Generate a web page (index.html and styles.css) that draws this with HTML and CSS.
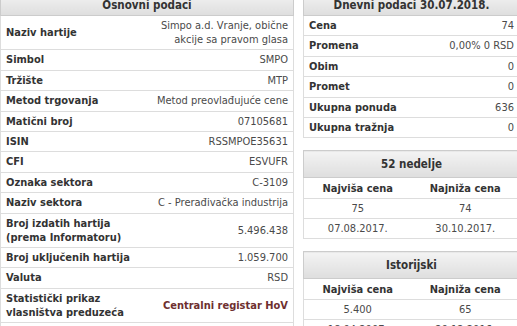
FILE: index.html
```html
<!DOCTYPE html>
<html lang="sr">
<head>
<meta charset="utf-8">
<title>SMPO – Simpo a.d. Vranje</title>
<link rel="stylesheet" href="styles.css">
</head>
<body>
<div class="page">
  <div class="col-main">
    <table class="info">
      <thead>
        <tr><th colspan="2" class="head head-top">Osnovni podaci</th></tr>
      </thead>
      <tbody>
        <tr><td class="lbl">Naziv hartije</td><td class="val">Simpo a.d. Vranje, obične akcije sa pravom glasa</td></tr>
        <tr><td class="lbl">Simbol</td><td class="val">SMPO</td></tr>
        <tr><td class="lbl">Tržište</td><td class="val">MTP</td></tr>
        <tr><td class="lbl">Metod trgovanja</td><td class="val">Metod preovlađujuće cene</td></tr>
        <tr><td class="lbl">Matični broj</td><td class="val">07105681</td></tr>
        <tr><td class="lbl">ISIN</td><td class="val">RSSMPOE35631</td></tr>
        <tr><td class="lbl">CFI</td><td class="val">ESVUFR</td></tr>
        <tr><td class="lbl">Oznaka sektora</td><td class="val">C-3109</td></tr>
        <tr><td class="lbl">Naziv sektora</td><td class="val">C - Prerađivačka industrija</td></tr>
        <tr><td class="lbl">Broj izdatih hartija (prema Informatoru)</td><td class="val">5.496.438</td></tr>
        <tr><td class="lbl">Broj uključenih hartija</td><td class="val">1.059.700</td></tr>
        <tr><td class="lbl">Valuta</td><td class="val">RSD</td></tr>
        <tr><td class="lbl">Statistički prikaz vlasništva preduzeća</td><td class="val"><a class="link" href="#">Centralni registar HoV</a></td></tr>
        <tr><td class="lbl">Internet prezentacija</td><td class="val"><a class="link" href="#">www.simpo.rs</a></td></tr>
      </tbody>
    </table>
  </div>

  <div class="col-side">
    <table class="info">
      <thead>
        <tr><th colspan="2" class="head head-top">Dnevni podaci 30.07.2018.</th></tr>
      </thead>
      <tbody>
        <tr><td class="lbl">Cena</td><td class="val">74</td></tr>
        <tr><td class="lbl">Promena</td><td class="val">0,00% 0 RSD</td></tr>
        <tr><td class="lbl">Obim</td><td class="val">0</td></tr>
        <tr><td class="lbl">Promet</td><td class="val">0</td></tr>
        <tr><td class="lbl">Ukupna ponuda</td><td class="val">636</td></tr>
        <tr><td class="lbl">Ukupna tražnja</td><td class="val">0</td></tr>
      </tbody>
    </table>

    <table class="range">
      <thead>
        <tr><th colspan="2" class="head">52 nedelje</th></tr>
      </thead>
      <tbody>
        <tr><td class="sub">Najviša cena</td><td class="sub">Najniža cena</td></tr>
        <tr><td>75</td><td>74</td></tr>
        <tr><td>07.08.2017.</td><td>30.10.2017.</td></tr>
      </tbody>
    </table>

    <table class="range">
      <thead>
        <tr><th colspan="2" class="head">Istorijski</th></tr>
      </thead>
      <tbody>
        <tr><td class="sub">Najviša cena</td><td class="sub">Najniža cena</td></tr>
        <tr><td>5.400</td><td>65</td></tr>
        <tr><td>18.04.2007.</td><td>29.12.2016.</td></tr>
      </tbody>
    </table>
  </div>
</div>
</body>
</html>
```

FILE: styles.css
```css
html, body {
  margin: 0;
  padding: 0;
  overflow: hidden;
  background: #ffffff;
}

body {
  font-family: "DejaVu Sans Condensed", "DejaVu Sans", sans-serif;
  font-size: 11px;
  color: #4a4a4a;
}

/* page is scrolled a little, so the top headers are partly hidden */
.page {
  display: flex;
  gap: 9px;
  width: 530px;
  margin-top: -9px;
}

.col-main {
  width: 294px;
  flex: none;
}

.col-side {
  width: 217px;
  flex: none;
  display: flex;
  flex-direction: column;
}

table {
  border-collapse: collapse;
  width: 100%;
}

.head {
  height: 27px;
  box-sizing: border-box;
  padding: 0 5px;
  font-size: 11.5px;
  font-weight: bold;
  color: #333333;
  text-align: center;
  background: linear-gradient(#f3f3f3, #dedede);
  border: 1px solid #cccccc;
}

.head-top {
  height: 24px;
  padding-top: 3px;
}

.info td {
  padding: 3px 5px 2.4px;
  line-height: 14px;
  border-bottom: 1px solid #dddddd;
  vertical-align: middle;
}

.info {
  border-left: 1px solid #dddddd;
  border-right: 1px solid #dddddd;
}

.info .lbl {
  width: 50%;
  font-weight: bold;
  color: #333333;
  text-align: left;
}

.info .val {
  width: 50%;
  text-align: right;
}

.link {
  color: #6e2f2f;
  font-weight: bold;
  text-decoration: none;
}

.col-side .info {
  margin-bottom: 12px;
}

.range {
  border: 1px solid #dddddd;
  margin-bottom: 12px;
}

.range td {
  width: 50%;
  text-align: center;
  padding: 3px 5px 2px;
  line-height: 14px;
  border-bottom: 1px solid #dddddd;
}

.range .sub {
  font-weight: bold;
  color: #333333;
  padding-top: 4px;
}
```
